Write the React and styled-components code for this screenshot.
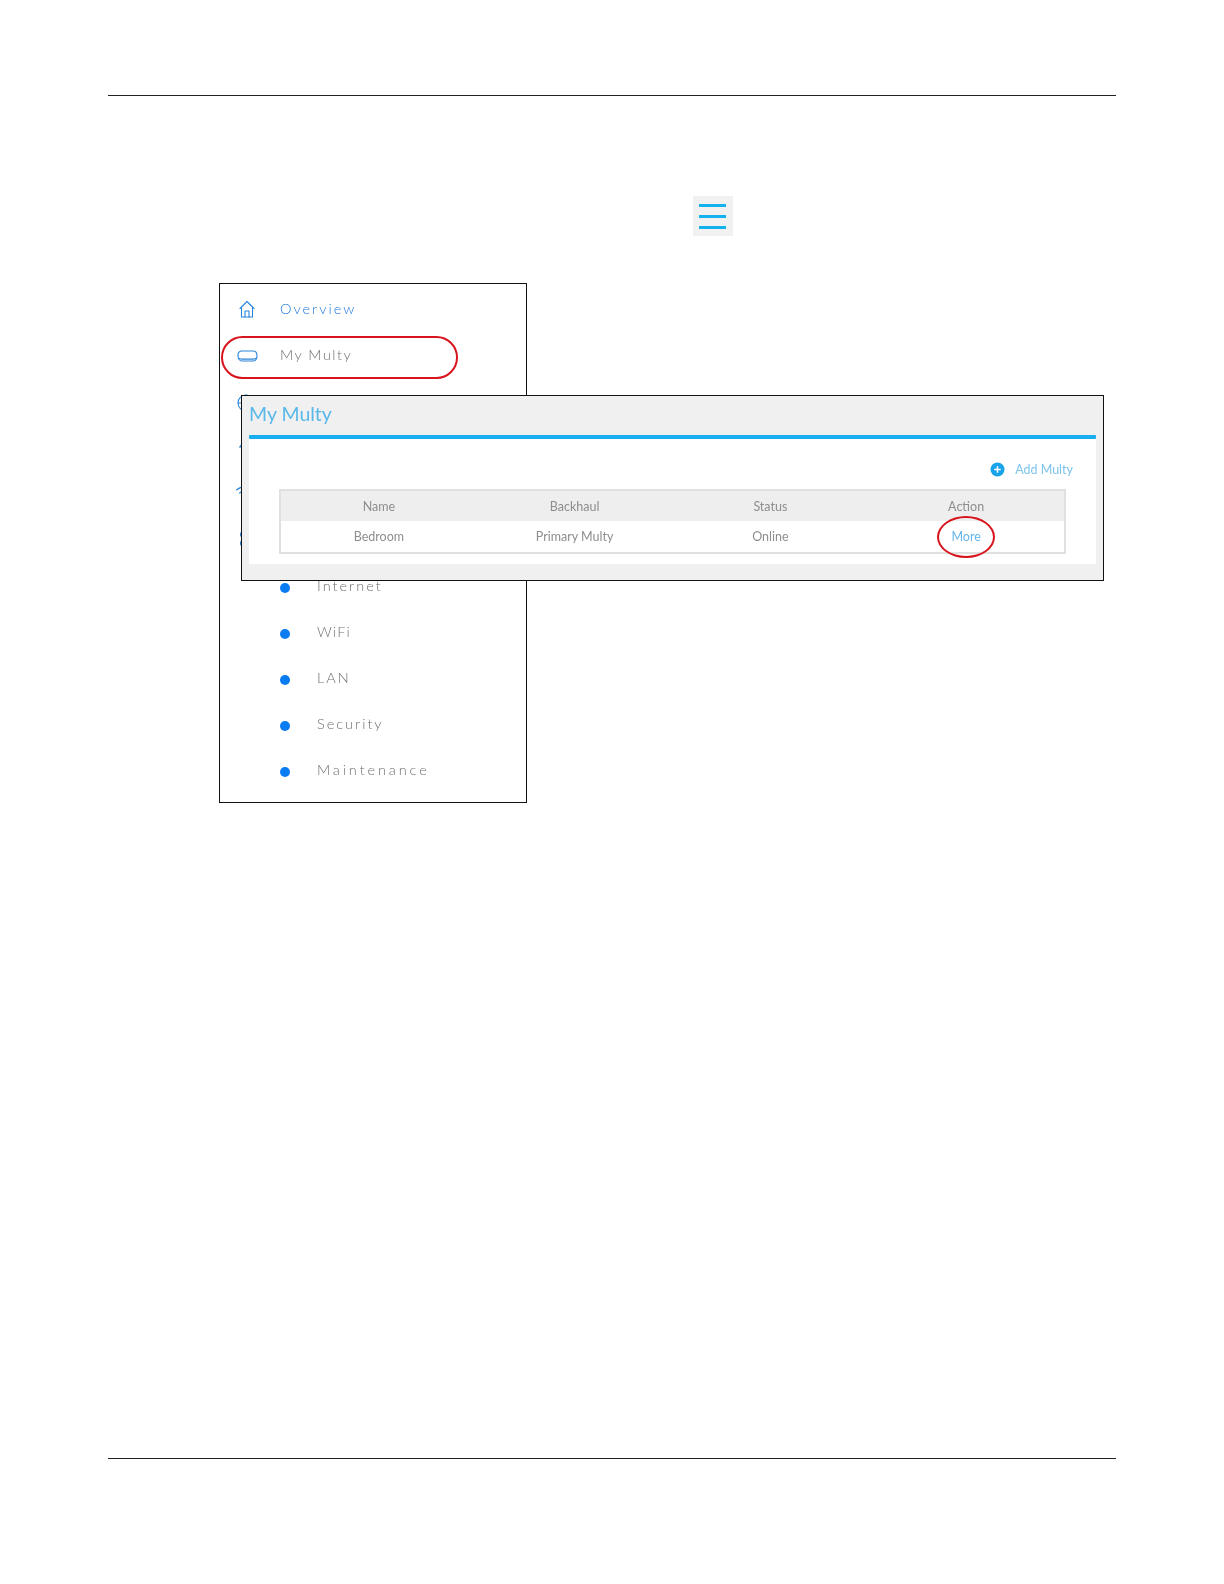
import React from "react";
import styled, { createGlobalStyle } from "styled-components";

const Global = createGlobalStyle`
  html, body { margin: 0; padding: 0; background: #fff; }
  * { box-sizing: border-box; }
`;

const Page = styled.div`
  width: 1224px;
  height: 1584px;
  padding: 95px 108px 125px;
  display: flex;
  flex-direction: column;
  font-family: "Lato", "Liberation Sans", sans-serif;
`;

const Rule = styled.div`
  height: 1px;
  background: #222;
  flex: none;
`;

const Spacer = styled.div`
  flex: 1;
`;

const MenuButton = styled.div`
  width: 40px;
  height: 40px;
  margin: 100px 0 0 585px;
  background: #f1f1f1;
  display: flex;
  flex-direction: column;
  align-items: center;
  justify-content: center;
  gap: 8px;
  filter: blur(0.4px);
`;

const MenuBar = styled.span`
  display: block;
  width: 27px;
  height: 3px;
  margin-right: 1px;
  background: #13b1ee;
`;

const Figure = styled.div`
  position: relative;
  margin: 47px 0 0 111px;
`;

const SideMenu = styled.div`
  width: 308px;
  height: 520px;
  border: 1px solid #111;
  padding-top: 1px;
  background: #fff;
`;

const MenuRow = styled.div`
  height: 46px;
  display: flex;
  align-items: center;
  padding-left: 16px;
  font-size: 14.5px;
  letter-spacing: ${(p) => p.$spacing || 2}px;
  font-weight: 300;
  color: ${(p) => (p.$active ? "#1f78d8" : "#707070")};
  filter: blur(0.3px);
`;

const MenuIcon = styled.span`
  width: 24px;
  height: 24px;
  margin-right: 20px;
  flex: none;
  display: flex;
  align-items: center;
  justify-content: flex-start;
`;

const SubList = styled.div`
  padding-top: 1px;
`;

const SubRow = styled.div`
  height: 46px;
  display: flex;
  align-items: center;
  padding-left: 60px;
  font-size: 14.5px;
  letter-spacing: ${(p) => p.$spacing || 2}px;
  font-weight: 300;
  color: #707070;
  filter: blur(0.3px);
`;

const Bullet = styled.span`
  width: 10px;
  height: 10px;
  border-radius: 50%;
  background: #0a7cf2;
  flex: none;
  margin: 5px 27px 0 0;
`;

const Oval = styled.div`
  position: absolute;
  border: 2px solid #d8141c;
  border-radius: ${(p) => p.$radius};
  pointer-events: none;
`;

const MultyOval = styled(Oval)`
  left: 2px;
  top: 53px;
  width: 237px;
  height: 43px;
`;

const Popup = styled.div`
  position: absolute;
  left: 22px;
  top: 112px;
  width: 863px;
  height: 186px;
  border: 1px solid #111;
  background: #f0f0f0;
  padding: 0 7px;
  display: flex;
  flex-direction: column;
`;

const PopupTitle = styled.div`
  height: 39px;
  padding-top: 3px;
  font-size: 19.5px;
  line-height: 30px;
  font-weight: 400;
  color: #58b8ea;
  filter: blur(0.6px);
`;

const BlueRule = styled.div`
  height: 4px;
  background: #18aef0;
  border-radius: 1px;
  flex: none;
  filter: blur(0.3px);
`;

const Panel = styled.div`
  position: relative;
  height: 125px;
  background: #fff;
  padding: 0 30px;
  display: flex;
  flex-direction: column;
`;

const Toolbar = styled.div`
  height: 50px;
  display: flex;
  align-items: center;
  justify-content: flex-end;
  padding: 11px 0 0;
  margin-right: -7px;
  gap: 10px;
  font-size: 12.5px;
  color: #7cc4ec;
  filter: blur(0.6px);
`;

const Table = styled.div`
  height: 65px;
  border: 2px solid #e0e0e0;
  filter: blur(0.6px);
`;

const TableRow = styled.div`
  height: 30px;
  display: grid;
  grid-template-columns: repeat(4, 1fr);
  align-items: center;
  background: ${(p) => (p.$head ? "#eeeeee" : "#fff")};
  font-size: 12.5px;
  color: #8e8e8e;
`;

const Cell = styled.div`
  text-align: center;
  color: ${(p) => (p.$link ? "#62b6ea" : "inherit")};
`;

const MoreOval = styled(Oval)`
  right: 101px;
  top: 77px;
  width: 58px;
  height: 42px;
`;

const Glyph = styled.svg`
  flex: none;
  fill: none;
  stroke: #2a86dc;
  stroke-width: 1.1;
  stroke-linecap: round;
  stroke-linejoin: round;
  margin: ${(p) => p.$y || 0}px 0 0 ${(p) => p.$x || 0}px;
`;

const HomeIcon = () => (
  <Glyph width="16" height="18" viewBox="0 0 16 18" $x={3} $y={2}>
    <path d="M1 8.500 8 1.500l7 7" />
    <path d="M2.500 7.500v9.500h11V7.500" />
    <path d="M6 17v-6h4v6" />
  </Glyph>
);

const DeviceIcon = () => (
  <Glyph width="21" height="12" viewBox="0 0 21 12" $x={1} $y={4}>
    <path d="M5 1h11c2.600 0 4 1.800 4 4.500 0 3.300-1.600 5.500-4 5.500H5c-2.400 0-4-2.200-4-5.500C1 2.800 2.400 1 5 1z" />
    <path d="M1.500 8.200c.8.800 2 .9 3.500.9h11c1.500 0 2.700-.1 3.500-.9" />
  </Glyph>
);

const GlobeIcon = () => (
  <Glyph width="18" height="18" viewBox="0 0 18 18" $x={1} $y={6}>
    <circle cx="9" cy="9" r="8" />
    <path d="M1 9h16M9 1c-4 4-4 12 0 16M9 1c4 4 4 12 0 16" />
  </Glyph>
);

const ArrowIcon = () => (
  <Glyph width="18" height="18" viewBox="0 0 18 18" $x={2} $y={8}>
    <path d="M5 2v14M5 2 1.500 6h7z" />
    <path d="M13 16V2M13 16l-3.500-4h7z" />
  </Glyph>
);

const WifiIcon = () => (
  <Glyph width="18" height="18" viewBox="0 0 18 18">
    <path d="M.5 7c4.800-4.200 12.200-4.200 17 0M3.500 10c3.200-2.800 7.800-2.800 11 0M6.500 13c1.500-1.200 3.500-1.200 5 0" />
  </Glyph>
);

const GearIcon = () => (
  <Glyph width="18" height="18" viewBox="0 0 18 18" $x={2} $y={2}>
    <circle cx="6" cy="4.500" r="3.500" />
    <circle cx="6" cy="13.500" r="3.500" />
    <path d="M9.500 4.500h7M9.500 13.500h7" />
  </Glyph>
);

const PlusIcon = () => (
  <svg width="15" height="15" viewBox="0 0 15 15">
    <circle cx="7.500" cy="7.500" r="7" fill="#18a3ea" />
    <path d="M7.500 4.200v6.600M4.200 7.500h6.600" stroke="#fff" strokeWidth="1.500" />
  </svg>
);

const topRows = [
  { icon: <HomeIcon />, label: "Overview", active: true },
  { icon: <DeviceIcon />, label: "My Multy", spacing: 1.5 },
  { icon: <GlobeIcon /> },
  { icon: <ArrowIcon /> },
  { icon: <WifiIcon /> },
  { icon: <GearIcon /> },
];

const subRows = [
  { label: "Internet" },
  { label: "WiFi", spacing: 1.2 },
  { label: "LAN" },
  { label: "Security" },
  { label: "Maintenance", spacing: 2.9 },
];

export default function App() {
  return (
    <Page>
      <Global />
      <Rule />
      <MenuButton>
        <MenuBar />
        <MenuBar />
        <MenuBar />
      </MenuButton>
      <Figure>
        <SideMenu>
          {topRows.map((r, i) => (
            <MenuRow key={i} $active={r.active} $spacing={r.spacing}>
              <MenuIcon>{r.icon}</MenuIcon>
              {r.label}
            </MenuRow>
          ))}
          <SubList>
            {subRows.map((s) => (
              <SubRow key={s.label} $spacing={s.spacing}>
                <Bullet />
                {s.label}
              </SubRow>
            ))}
          </SubList>
        </SideMenu>
        <MultyOval $radius="22px" />
        <Popup>
          <PopupTitle>My Multy</PopupTitle>
          <BlueRule />
          <Panel>
            <Toolbar>
              <PlusIcon />
              Add Multy
            </Toolbar>
            <Table>
              <TableRow $head>
                <Cell>Name</Cell>
                <Cell>Backhaul</Cell>
                <Cell>Status</Cell>
                <Cell>Action</Cell>
              </TableRow>
              <TableRow>
                <Cell>Bedroom</Cell>
                <Cell>Primary Multy</Cell>
                <Cell>Online</Cell>
                <Cell $link>More</Cell>
              </TableRow>
            </Table>
            <MoreOval $radius="50%" />
          </Panel>
        </Popup>
      </Figure>
      <Spacer />
      <Rule />
    </Page>
  );
}
